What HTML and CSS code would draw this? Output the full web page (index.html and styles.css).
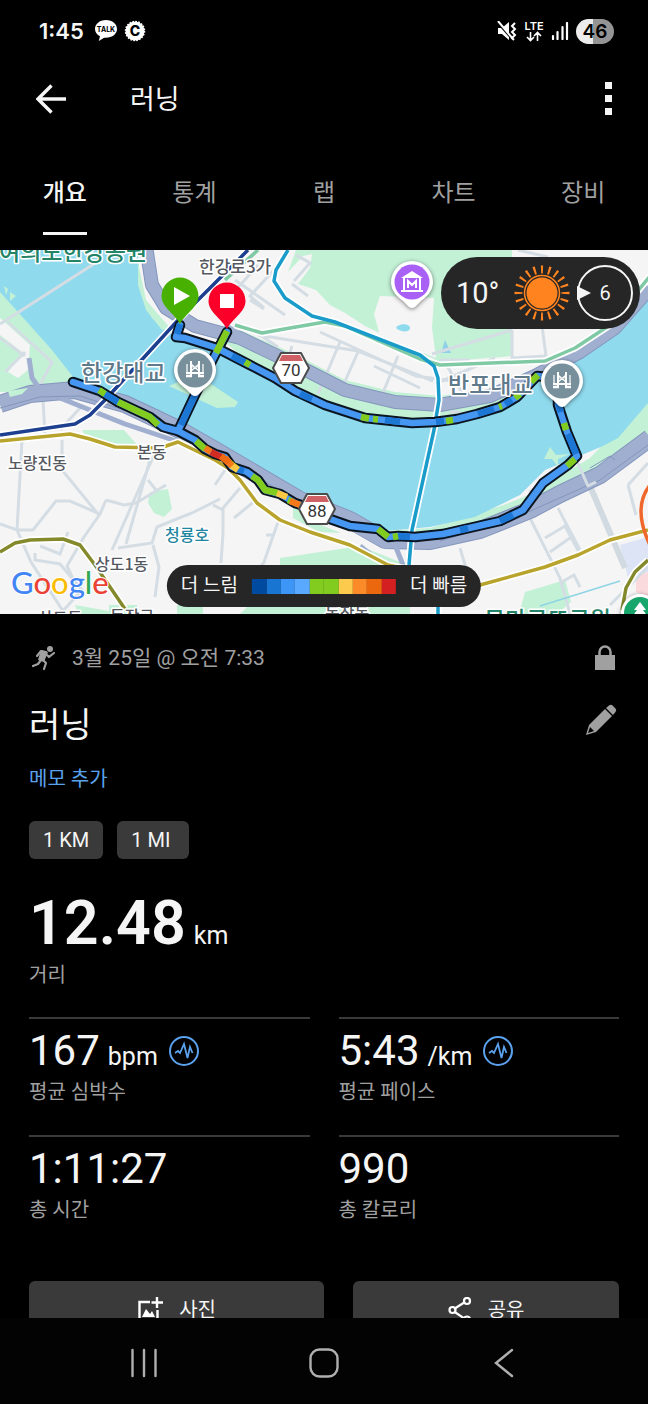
FILE: index.html
```html
<!DOCTYPE html>
<html lang="ko">
<head>
  <meta charset="UTF-8">
  <meta name="viewport" content="width=device-width, initial-scale=1.0">
  <title>러닝</title>
  <link rel="stylesheet" href="styles.css">
</head>
<body>
  <div class="status-bar">
    <div class="status-left">
      <span class="clock">1:45</span>
      <svg width="24" height="24" viewBox="0 0 24 24">
        <path d="M12 1C5.500 1 1 5 1 10c0 3.200 2 5.800 5 7.300L4.800 22l5.300-3.300c8 .6 12.900-3.700 12.900-8.700S18.500 1 12 1z" fill="#fff"/>
        <text x="12" y="13" class="talk">TALK</text>
      </svg>
      <svg width="22" height="22" viewBox="0 0 22 22">
        <circle cx="11" cy="11" r="9.500" fill="#fff"/>
        <circle cx="11" cy="11" r="9.500" fill="none" stroke="#fff" stroke-width="1.500" stroke-dasharray="1.700 1.284"/>
        <text x="11" y="16" class="coin">C</text>
      </svg>
    </div>
    <div class="status-right">
      <svg width="20" height="20" viewBox="0 0 20 20">
        <path d="M1 7h4l7-6v18l-7-6H1z" fill="#fff"/>
        <path d="M0 1l15 17" stroke="#000" stroke-width="2"/>
        <path d="M1 0l15 18" stroke="#fff" stroke-width="2"/>
        <path d="M18 2l-3 3 3 3-3 3 3 3-3 3 2 2" fill="none" stroke="#fff" stroke-width="2"/>
      </svg>
      <svg width="20" height="22" viewBox="0 0 20 22">
        <text x="10" y="10" class="lte">LTE</text>
        <path d="M6.500 12v8M3 17l3.500 3.500L10 17M13.500 21v-8M10 16l3.500-3.500L17 16" fill="none" stroke="#fff" stroke-width="1.600"/>
      </svg>
      <svg width="18" height="18" viewBox="0 0 18 18">
        <path d="M2 14v3M6.500 10v7M11.500 5v12M16 1v16" stroke="#fff" stroke-width="2.200" stroke-linecap="round"/>
      </svg>
      <span class="battery">46</span>
    </div>
  </div>

  <header class="app-bar">
    <button class="icon-btn" aria-label="뒤로">
      <svg width="30" height="30" viewBox="0 0 30 30">
        <path d="M15.500 1.500L2 15l13.500 13.500M2 15h28" fill="none" stroke="#f5f5f5" stroke-width="3.400"/>
      </svg>
    </button>
    <h1>러닝</h1>
    <button class="icon-btn menu-btn" aria-label="메뉴">
      <svg width="8" height="34" viewBox="0 0 8 34">
        <path d="M0 0h7v7H0zM0 13h7v7H0zM0 26h7v7H0z" fill="#f5f5f5"/>
      </svg>
    </button>
  </header>

  <nav class="tabs">
    <a href="#" class="active">개요</a>
    <a href="#">통계</a>
    <a href="#">랩</a>
    <a href="#">차트</a>
    <a href="#">장비</a>
  </nav>

  <section class="map">
    <svg class="map-canvas" viewBox="0 250 648 364" preserveAspectRatio="xMidYMid slice">
      <rect y="250" width="648" height="364" fill="#f5f5f5"/>

      <!-- parks -->
      <g fill="#c3f1d6">
        <path d="M0 285L60 345L80 392L0 392z"/>
        <path d="M296 250L288 272L303 256L312 254L310 268L298 284L316 290L330 305L345 313L365 326L440 362L512 356V250z"/>
        <path d="M82 430h42l14 16-20 0-30-6z"/>
        <path d="M150 492l18-3 4 20-8 8-10-4-6-10z"/>
        <path d="M293 505l18 16 30 12-22-1-26-14z"/>
        <path d="M280 558l80-12 50 20v48H240l40-40z"/>
        <path d="M525 592l40-12 6 22-14 12h-38z"/>
        <path d="M75 605l34 6v-6h28v9H78zM177 605h26v9h-26z"/>
        <path d="M430 528l90-28 70-42 58-62v44l-90 60-100 32h-90z"/>
      </g>
      <path d="M8 325L30 345L28 370L18 378L8 372L22 352L0 335V318z" fill="#f5f5f5"/>
      <path d="M380 296l-6 18 6 22 56 22-4-30 2-30z" fill="#f5f5f5"/>
      <path d="M396 328c2-5 14-5 14 0s-10 4-14 0z" fill="#90daee"/>
      <path d="M441 353l4-13 6 13z" fill="#90cfe8"/>
      <path d="M620 545l28-8v35l-20 6z" fill="#dce4f5"/>
      <path d="M636 576l12-4v24l-12-4z" fill="#fadadd"/>

      <!-- river -->
      <path fill="#90daee" d="M0 250H138L140 285L152 318L176 337L218 348L290 388L340 410L412 423L460 418L520 396L548 372L590 352L612 330L648 292V403L618 438L603 446L577 457L545 470L520 495L475 517L430 527L385 531L330 520L260 480L215 450L180 430L120 400L77 382L52 350L0 292z"/>
      <g fill="#c3f1d6">
        <path d="M138 262L146 300L170 328L162 330L146 310L138 285z"/>
        <path d="M196 374l42 28-3 5-18 1-48-22z"/>
        <path d="M550 447l6 8 14-1-12 5 0 8-6-8-8 0z"/>
        <path d="M475 517l58-24-14 16-40 12z"/>
        <path d="M4 286l4 3-2 6zM10 292l6 4-6 5z"/>
        <path d="M218 336L248 362L295 389L325 403L365 416L412 421L457 417L500 405L517 395L500 388L440 396L395 392L345 380L290 352L240 330z"/>
      </g>

      <!-- minor roads -->
      <g fill="none" stroke="#d5dde4" stroke-width="3">
        <path d="M0 324L100 260M8 322L52 362L40 385M0 338l25 18M5 372l20-20M43 400l2 35M60 430l20-22"/>
        <path d="M22 440L17 530L0 524M17 530l14 32 34 52M17 530L33 530L56 501L70 501L100 514L84 537L67 566L76 585M62 440v30L98 514M106 500l18 5 12-2 30-18M106 500l-6 14M40 546l20 8 8-22M35 553v7l25 4 22 26-22 24"/>
        <path d="M154 455L112 550M150 460L126 544M148 480l8 10M118 548l34-5 5-16 35-14 28-14M153 545l6 22-4 30"/>
        <path d="M225 470l-10 15M240 488l-17 20 0 25-2 30M223 510l-10-5M256 500l-22 18M278 522l-14 40-10 14M266 535h8"/>
        <path d="M218 310l40-45M235 280l50 35M250 300l14 9M264 308l-14-12 24-26M292 284l16 12M296 255l14 8-16 18M258 335l100 16 75 30M320 332l96 44 44 6M340 342l-22 52M358 352l-16 36M292 346l-8 26M398 356l-18 44M374 366l46 22M260 335l18 12"/>
        <path d="M512 330v28l34-2-4-30M435 384l60-26M445 362l20 36M518 250l30 7M512 330l-80 24M440 360h30"/>
        <path d="M530 518l30 60 10 36M545 538l20-12 15 28M550 552l20-14M558 508l22 42M460 548l6 20M610 605l38-38M628 485l20-22M628 485l8 30M560 583l14-8 6 12"/>
      </g>
      <path d="M590 486l35 82" stroke="#d2dae1" stroke-width="6"/>
      <path d="M540 606l80-25" stroke="#8ed4e4" stroke-width="1.500"/>

      <!-- riverside expressways -->
      <g fill="none" stroke-linejoin="round">
        <path stroke="#8496bd" stroke-width="14" d="M146 246L152 285L166 308L195 326L240 338L290 362L345 390L395 402L440 405L490 396L535 376L580 352L615 328L650 288"/>
        <path stroke="#a0afcf" stroke-width="12" d="M146 246L152 285L166 308L195 326L240 338L290 362L345 390L395 402L440 405L490 396L535 376L580 352L615 328L650 288"/>
        <path stroke="#8496bd" stroke-width="18" d="M0 404L30 394L75 390L125 404L180 430L215 450L300 500L350 520L385 540L430 541L480 530L530 510L560 494L600 475L650 438"/>
        <path stroke="#a0afcf" stroke-width="16" d="M0 404L30 394L75 390L125 404L180 430L215 450L300 500L350 520L385 540L430 541L480 530L530 510L560 494L600 475L650 438"/>
        <path stroke="#a0afcf" stroke-width="5" d="M29 358l3 20 10 14M0 400l20-4M225 325l16 10M60 398l65 26 60 20M345 524l40 22 60-4M360 546l10 8M395 545l8 20"/>
        <path stroke="#8496bd" stroke-width="1" d="M0 408L40 397L80 396L130 412L178 436M440 541L510 520L600 480L648 445M590 468l20-12 5 4M220 456l80 46"/>
        <path d="M8 391l20-3-6 6-12 3z" fill="#c3f1d6"/>
        <path stroke="#d5dde4" stroke-width="3" d="M450 412l10 0M572 450l16 36 8-4M565 472l-36 20"/>
      </g>

      <!-- subway lines -->
      <g fill="none" stroke-linejoin="round" stroke="#fff" stroke-width="7">
        <path d="M248 250L180 318L105 400L90 415L75 424L0 435"/>
        <path d="M288 250L276 270L274 281L285 298L312 316L335 322L420 355L434 366L438 378L439 400L434 430L412 530L409 565L438 600V614"/>
        <path d="M235 325L262 333L290 328L325 322L345 326L420 359L440 365L545 361L575 348L610 325L650 276"/>
        <path d="M0 441L70 434L90 439L115 447L160 448L178 442L215 460L228 468L240 480L257 503L280 520L310 532L350 545L388 565L480 585L545 567L578 555L610 540L648 530"/>
        <path d="M0 552L15 543L30 540L63 539L80 545L95 565L125 609M648 560L635 572L626 588L622 610"/>
      </g>
      <g fill="none" stroke-linejoin="round" stroke-width="3.500">
        <path stroke="#1c3f8f" d="M248 250L180 318L105 400L90 415L75 424L0 435"/>
        <path stroke="#7fc9a4" d="M258 250L225 280M235 325L262 333L290 328L325 322L345 326L420 359L440 365L545 361L575 348L610 325L650 276"/>
        <path stroke="#1a9ccb" d="M288 250L276 270L274 281L285 298L312 316L335 322L420 355L434 366L438 378L439 400L434 430L412 530L409 565M438 600V614"/>
        <path stroke="#b8a42c" d="M0 441L70 434L90 439L115 447L160 448L178 442L215 460L228 468L240 480L257 503L280 520L310 532L350 545L388 565L480 585L545 567L578 555L610 540L648 530"/>
        <path stroke="#848a2c" d="M0 552L15 543L30 540L63 539L80 545L95 565L125 609M648 560L635 572L626 588L622 610"/>
        <path stroke="#f0672c" d="M650 485Q632 508 650 545"/>
      </g>

      <!-- place names -->
      <g class="place">
        <text x="199" y="273" class="wide">한강로3가</text>
        <text x="8" y="469">노량진동</text>
        <text x="137" y="458">본동</text>
        <text x="95" y="570">상도1동</text>
        <text x="38" y="624">상도동</text>
        <text x="110" y="622">동작구</text>
        <text x="325" y="619">동작동</text>
      </g>
      <text x="165" y="541" class="place lake">청룡호</text>
      <text x="-1" y="260" class="place park">여의도한강공원</text>
      <text x="484" y="628" class="place park">몽마르뜨공원</text>

      <!-- recorded track -->
      <g fill="none" stroke-linejoin="round" stroke-linecap="round">
        <g stroke="#0b1522" stroke-width="10.500">
          <path d="M180 325L176 337L185 338L217 348L248 364L275 378L295 391L325 405L365 418L412 423L435 422L457 419L477 414L500 407L517 397L537 376L558 378L558 405L567 432L577 456L568 465L543 483L523 510L500 521L443 534L415 537L398 536L388 537L378 529L350 526L330 519L310 508L295 503L280 494L265 490L258 480L247 472L232 467L225 457L215 454L205 449L195 440L178 431L163 427L150 417L118 402L100 391L73 382"/>
          <path d="M178 431L195 395L215 355L227 332"/>
        </g>
        <g stroke="#4697f2" stroke-width="6.500">
          <path d="M180 325L176 337L185 338L217 348L248 364L275 378L295 391L325 405L365 418L412 423L435 422L457 419L477 414L500 407L517 397L537 376L558 378L558 405L567 432L577 456L568 465L543 483L523 510L500 521L443 534L415 537L398 536L388 537L378 529L350 526L330 519L310 508L295 503L280 494L265 490L258 480L247 472L232 467L225 457L215 454L205 449L195 440L178 431L163 427L150 417L118 402L100 391L73 382"/>
          <path d="M178 431L195 395L215 355L227 332"/>
        </g>
        <g stroke-linecap="butt" stroke-width="6.500">
          <path stroke="#1c76d4" d="M180 324L177 334M105 394L118 402M181 425L195 395M232 356L248 364M300 394L312 399M385 420L400 422M436 422L444 421M478 414L494 409M505 404L512 400M558 402L561 412M568 434L576 454M513 515L500 521M468 528L460 530M398 536L410 537M236 469L244 471"/>
          <path stroke="#82cb1f" d="M99 390L105 394M118 402L150 417L158 425M216 353L227 331M245 362L250 365M361 417L369 418.500M373 419L378 419.500M446 421L453 420M499 407L502 406M515 398L520 394M531 382L538 375M564 423L566 430M575 459L567 466M196 441L205 449M237 469L225 459M252 476L258 480L265 490L278 493M288 500L293 502M378 529L388 537M393 537L398 536"/>
          <path stroke="#fcc844" d="M238 470L231 465M277 493L287 497"/>
          <path stroke="#f5791b" d="M205 448L211 452M290 501L300 505M225 458L232 466"/>
          <path stroke="#d22b1f" d="M211 452L217 455L224 458"/>
          <path stroke="#f06a12" d="M221 456L229 463"/>
        </g>
      </g>

      <g class="place bridge">
        <text x="81" y="381">한강대교</text>
        <text x="448" y="393">반포대교</text>
      </g>

      <!-- route shields -->
      <g transform="translate(291 368)">
        <path d="M-10-15H10L18 0L10 15H-10L-18 0z" fill="#fff" stroke="#4c4c4c" stroke-width="2" stroke-linejoin="round"/>
        <path d="M-9-13H9L12-7H-12z" fill="#cf6164"/>
        <text y="8" class="shield">70</text>
      </g>
      <g transform="translate(317 509)">
        <path d="M-10-15H10L18 0L10 15H-10L-18 0z" fill="#fff" stroke="#4c4c4c" stroke-width="2" stroke-linejoin="round"/>
        <path d="M-9-13H9L12-7H-12z" fill="#cf6164"/>
        <text y="8" class="shield">88</text>
      </g>

      <!-- pins -->
      <defs>
        <g id="poi">
          <path d="M-21 0A21 21 0 1 1 21 0C21 8 16 14 9 19L3 25Q0 27-3 25L-9 19C-16 14-21 8-21 0z" fill="#fff"/>
        </g>
        <g id="bridge">
          <circle r="17.500" fill="#78909c"/>
          <path d="M-4-9V6M4-9V6M-9 3H9" fill="none" stroke="#fff" stroke-width="2"/>
          <path d="M-8-6V3M8-6V3M-4-3H4M-4-6L4 1M4-6L-4 1" fill="none" stroke="#fff" stroke-width="1.200"/>
          <path d="M-9 6H-3M3 6H9" stroke="#fff" stroke-width="2.500"/>
        </g>
        <path id="drop" d="M-18.500 0A18.500 18.500 0 1 1 18.500 0C18.500 11 6 17 0 28C-6 17-18.500 11-18.500 0z"/>
      </defs>
      <g class="pin-shadow">
        <g transform="translate(195 370)"><use href="#poi"/><use href="#bridge"/></g>
        <g transform="translate(562 381)"><use href="#poi"/><use href="#bridge"/></g>
        <g transform="translate(412 282)">
          <use href="#poi"/>
          <circle r="17.500" fill="#a960f5"/>
          <path d="M-11-4L0-11L11-4z" fill="#fff"/>
          <path d="M-8-4V8M8-4V8M-11 9H11M-4 6V-1L0 3L4-1V6" fill="none" stroke="#fff" stroke-width="2"/>
        </g>
        <g transform="translate(640 613)">
          <circle r="19" fill="#fff"/>
          <circle r="16" fill="#17a66b"/>
          <path d="M0-11l6 8H3l5 7H-8l5-7h-3z" fill="#fff"/>
        </g>
      </g>
      <g transform="translate(180 296)">
        <use href="#drop" fill="#47b000"/>
        <path d="M-6-9L10 0L-6 9z" fill="#fff"/>
      </g>
      <g transform="translate(227 301)">
        <use href="#drop" fill="#fb0029"/>
        <path d="M-7-7H7V7H-7z" fill="#fff"/>
      </g>

      <text x="11" y="594" class="google"><tspan fill="#4285f4">G</tspan><tspan fill="#ea4335">o</tspan><tspan fill="#fbbc05">o</tspan><tspan fill="#4285f4">g</tspan><tspan fill="#34a853">l</tspan><tspan fill="#ea4335">e</tspan></text>
    </svg>

    <div class="weather">
      <span class="temp">10°</span>
      <svg width="56" height="56" viewBox="-28 -28 56 56">
        <circle r="15.500" fill="#ff831f"/>
        <circle r="17.500" fill="none" stroke="#ff831f" stroke-width="1.500"/>
        <!-- 20 rays, one every 18 degrees -->
        <circle r="23.500" fill="none" stroke="#ff831f" stroke-width="8" pathLength="200" stroke-dasharray="2.800 7.200" stroke-dashoffset="1.400"/>
      </svg>
      <svg width="58" height="58" viewBox="0 0 58 58">
        <circle cx="29" cy="29" r="27" fill="none" stroke="#f5f5f5" stroke-width="2"/>
        <path d="M1 22L15 29L1 36z" fill="#f5f5f5"/>
        <text x="29" y="36" class="wind">6</text>
      </svg>
    </div>

    <div class="legend">
      <span>더 느림</span>
      <div class="scale">
        <i class="s1"></i><i class="s2"></i><i class="s3"></i><i class="s4"></i><i class="s5"></i><i class="s5"></i><i class="s6"></i><i class="s7"></i><i class="s8"></i><i class="s9"></i>
      </div>
      <span>더 빠름</span>
    </div>
  </section>

  <main class="summary">
    <div class="date-row">
      <svg width="28" height="26" viewBox="0 0 28 26">
        <circle cx="21" cy="4" r="3" fill="#a0a0a0"/>
        <path d="M8 11L12 6L17 7M13 14L17 18L15 24M12 15L9 19L4 21M17 9L20 12L25 8" fill="none" stroke="#a0a0a0" stroke-width="2.200" stroke-linejoin="round" stroke-linecap="round"/>
        <path d="M12 5l7 2-4 10-6-2z" fill="#a0a0a0"/>
      </svg>
      <span class="date">3월 25일 @ 오전 7:33</span>
      <button class="icon-btn" aria-label="비공개">
        <svg width="28" height="26" viewBox="0 0 28 26">
          <path d="M4 10h20v15H4z" fill="#a0a0a0"/>
          <path d="M8.500 11V7a5.500 5.500 0 0 1 11 0v4" fill="none" stroke="#a0a0a0" stroke-width="2.500"/>
        </svg>
      </button>
    </div>

    <div class="title-row">
      <h2>러닝</h2>
      <button class="icon-btn" aria-label="이름 편집">
        <svg width="34" height="42" viewBox="0 0 34 42">
          <path d="M1 31L4 21L20 5L27 12L11 28zM21 4L24 1.500Q26 0 28 2L30.500 4.500Q32 6 30.500 8L28 11z" fill="#a0a0a0"/>
          <path d="M3 29l2-6 4 4z" fill="#000"/>
        </svg>
      </button>
    </div>

    <a href="#" class="memo">메모 추가</a>

    <div class="chips">
      <button>1 KM</button>
      <button>1 MI</button>
    </div>

    <div class="distance">
      <div class="value"><strong>12.48</strong><span class="unit">km</span></div>
      <div class="label">거리</div>
    </div>

    <div class="stats">
      <div class="stat">
        <div class="value">167<span class="unit">bpm</span>
          <button class="icon-btn pulse" aria-label="심박수 차트">
            <svg width="30" height="30" viewBox="0 0 30 30">
              <circle cx="15" cy="15" r="14" fill="none" stroke="#5ba2ee" stroke-width="2"/>
              <path d="M6 17l3-2 2 2 4-9 3.500 14L21 11l2.500 6" fill="none" stroke="#5ba2ee" stroke-width="1.800"/>
            </svg>
          </button>
        </div>
        <div class="label">평균 심박수</div>
      </div>
      <div class="stat">
        <div class="value">5:43<span class="unit">/km</span>
          <button class="icon-btn pulse" aria-label="페이스 차트">
            <svg width="30" height="30" viewBox="0 0 30 30">
              <circle cx="15" cy="15" r="14" fill="none" stroke="#5ba2ee" stroke-width="2"/>
              <path d="M6 17l3-2 2 2 4-9 3.500 14L21 11l2.500 6" fill="none" stroke="#5ba2ee" stroke-width="1.800"/>
            </svg>
          </button>
        </div>
        <div class="label">평균 페이스</div>
      </div>
      <div class="stat">
        <div class="value">1:11:27</div>
        <div class="label">총 시간</div>
      </div>
      <div class="stat">
        <div class="value">990</div>
        <div class="label">총 칼로리</div>
      </div>
    </div>

    <div class="actions">
      <button class="photo">
        <svg width="26" height="26" viewBox="0 0 26 26">
          <path d="M13 5H2.500V24H20.500V13M20 0V11M14.500 5.500H26" fill="none" stroke="#fff" stroke-width="2.400"/>
          <path d="M5 20l4-8 4 5 2-3 3 6z" fill="#fff"/>
        </svg>
        사진
      </button>
      <button class="share">
        <svg width="24" height="26" viewBox="0 0 24 26">
          <path d="M6 12L17 5M6 14.500L17 22" stroke="#fff" stroke-width="2.200"/>
          <g fill="none" stroke="#fff" stroke-width="2.200">
            <circle cx="4.500" cy="13" r="3"/>
            <circle cx="19" cy="4" r="3"/>
            <circle cx="19" cy="22.500" r="3"/>
          </g>
        </svg>
        공유
      </button>
    </div>
  </main>

  <nav class="system-nav">
    <button class="icon-btn" aria-label="최근 앱">
      <svg width="28" height="36" viewBox="0 0 28 36">
        <path d="M2.500 5v26M14 5v26M25.500 5v26" stroke="#b0b0b0" stroke-width="2.400" stroke-linecap="round"/>
      </svg>
    </button>
    <button class="icon-btn" aria-label="홈">
      <svg width="30" height="36" viewBox="0 0 30 36">
        <rect x="1.500" y="4.500" width="27" height="27" rx="9" fill="none" stroke="#b0b0b0" stroke-width="2.400"/>
      </svg>
    </button>
    <button class="icon-btn" aria-label="뒤로">
      <svg width="28" height="36" viewBox="0 0 28 36">
        <path d="M22 5L6 18l16 13" fill="none" stroke="#b0b0b0" stroke-width="2.400" stroke-linecap="round"/>
      </svg>
    </button>
  </nav>
</body>
</html>
```
FILE: styles.css
```css
* {
  box-sizing: border-box;
}
body {
  margin: 0;
  height: 100vh;
  display: flex;
  flex-direction: column;
  overflow: hidden;
  background: #000;
  color: #f5f5f5;
  font-family: Roboto, "Noto Sans CJK KR", sans-serif;
  font-size: 20px;
  line-height: 30px;
}
h1, h2 {
  margin: 0;
  font-weight: 400;
}
a {
  text-decoration: none;
}
svg {
  display: block;
  flex: none;
}
button {
  border: none;
  padding: 0;
  color: inherit;
  font: inherit;
  cursor: pointer;
}
.icon-btn {
  display: flex;
  background: none;
}

/* status bar */
.status-bar {
  display: flex;
  flex: none;
  justify-content: space-between;
  align-items: center;
  height: 62px;
  padding: 0 34px 0 39px;
}
.status-left, .status-right {
  display: flex;
  align-items: center;
}
.status-left {
  gap: 6px;
}
.status-right {
  gap: 7px;
}
.clock {
  margin-right: 4px;
  font: 600 22px/30px Inter, sans-serif;
}
.talk {
  font: 700 7px Inter, sans-serif;
  text-anchor: middle;
}
.coin {
  font: 800 14px Inter, sans-serif;
  text-anchor: middle;
}
.lte {
  font: 600 11px Inter, sans-serif;
  text-anchor: middle;
  fill: #fff;
}
.battery {
  width: 38px;
  border-radius: 13px;
  background: linear-gradient(90deg, #ececec 46%, #949494 46%);
  color: #000;
  font: 600 19px/25px Inter, sans-serif;
  text-align: center;
}

/* app bar */
.app-bar {
  display: flex;
  flex: none;
  align-items: center;
  height: 74px;
  padding: 0 35px 0 36px;
}
.app-bar h1 {
  margin-left: 64px;
  padding-top: 2px;
  font-size: 27px;
  line-height: 40px;
}
.menu-btn {
  margin-left: auto;
}
.tabs {
  display: grid;
  flex: none;
  grid-template-columns: repeat(5, 1fr);
  justify-items: center;
  padding: 39px 0 15px;
}
.tabs a {
  height: 60px;
  color: #a0a0a0;
  font-size: 24px;
  line-height: 36px;
}
.tabs .active {
  border-bottom: 3px solid #f5f5f5;
  color: #f5f5f5;
  font-weight: 500;
}

/* map */
.map {
  position: relative;
  flex: none;
  height: 364px;
  overflow: hidden;
}
.map-canvas {
  width: 100%;
  height: 100%;
}
.place {
  font: 500 16px "Noto Sans CJK KR", sans-serif;
  fill: #55595f;
  stroke: #fff;
  stroke-width: 3px;
  stroke-linejoin: round;
  paint-order: stroke;
}
.place .wide {
  font-size: 17px;
}
.bridge text {
  font-size: 23px;
  fill: #5f7a8a;
}
.lake {
  fill: #1f86a0;
}
.park {
  font-size: 23px;
  fill: #238468;
}
.shield {
  font: 17px Roboto, sans-serif;
  fill: #333;
  text-anchor: middle;
}
.pin-shadow {
  filter: drop-shadow(0 1px 2px rgba(0,0,0,0.5));
}
.google {
  font: 500 31px Lato, sans-serif;
  stroke: #fff;
  stroke-width: 2px;
  paint-order: stroke;
}
.weather, .legend {
  position: absolute;
  display: flex;
  align-items: center;
  background: #262626;
}
.weather {
  top: 7px;
  right: 8px;
  height: 72px;
  padding: 0 6px 0 15px;
  border-radius: 36px;
}
.temp {
  width: 58px;
  font-size: 29px;
}
.weather svg + svg {
  margin-left: 6px;
}
.wind {
  font: 20px Roboto, sans-serif;
  fill: #f5f5f5;
  text-anchor: middle;
}
.legend {
  bottom: 7px;
  left: 50%;
  transform: translateX(-50%);
  gap: 14px;
  height: 42px;
  padding: 0 14px;
  border-radius: 21px;
  font-size: 19px;
  white-space: nowrap;
}
.scale {
  display: grid;
  grid-template-columns: repeat(10, 1fr);
  width: 144px;
  height: 15px;
}
.s1 { background: #004a9f; }
.s2 { background: #1876d2; }
.s3 { background: #3d96f5; }
.s4 { background: #58a9ff; }
.s5 { background: #82cb1f; }
.s6 { background: #fccb4e; }
.s7 { background: #fb8b28; }
.s8 { background: #ec680f; }
.s9 { background: #d42020; }

/* summary */
.summary {
  flex: 1;
  min-height: 0;
  overflow: hidden;
  padding: 29px 29px 0;
}
.date-row, .title-row {
  display: flex;
  align-items: center;
}
.date-row .icon-btn, .title-row .icon-btn {
  margin-left: auto;
}
.date {
  margin-left: 15px;
  color: #a0a0a0;
  font-size: 21px;
}
.title-row {
  margin-top: 29px;
}
.title-row h2 {
  font-size: 34px;
  line-height: 46px;
}
.memo {
  display: block;
  margin-top: 16px;
  color: #5ba2ee;
}
.chips {
  display: flex;
  gap: 14px;
  margin: 27px 0 28px;
}
.chips button {
  min-width: 72px;
  height: 38px;
  padding: 0 14px;
  border-radius: 6px;
  background: #3a3a3a;
  text-align: left;
}
.value {
  display: flex;
  align-items: baseline;
  font-size: 42px;
  line-height: 50px;
}
.unit {
  margin-left: 8px;
  font-size: 25px;
  line-height: 25px;
}
.pulse {
  align-self: center;
  margin-left: 11px;
}
.label {
  padding-top: 1px;
  color: #a0a0a0;
}
.distance .value {
  font-size: 61px;
  line-height: 72px;
}
.distance strong {
  font-weight: 600;
}
.stats {
  display: grid;
  grid-template-columns: 1fr 1fr;
  column-gap: 29px;
  margin-top: 27px;
}
.stat {
  height: 118px;
  padding-top: 7px;
  border-top: 2px solid #3a3a3a;
}
.actions {
  display: flex;
  gap: 29px;
  margin-top: 28px;
}
.actions button {
  display: flex;
  justify-content: center;
  align-items: center;
  gap: 16px;
  height: 57px;
  border-radius: 6px;
  background: #3a3a3a;
}
.photo {
  flex: 10;
}
.share {
  flex: 9;
}

/* system navigation */
.system-nav {
  display: flex;
  flex: none;
  justify-content: space-between;
  height: 86px;
  padding: 4px 20% 0;
  background: #030303;
}
.system-nav button {
  align-items: center;
}
```
